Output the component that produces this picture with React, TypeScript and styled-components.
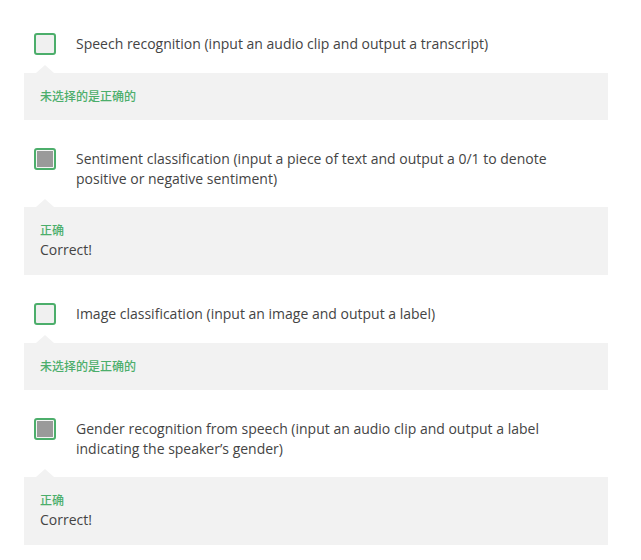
import React from "react";
import styled, { createGlobalStyle } from "styled-components";

const GlobalStyle = createGlobalStyle`
  html, body { margin: 0; padding: 0; background: #ffffff; }
  body { font-family: "Open Sans", "Noto Sans CJK SC", sans-serif; }
`;

const GREEN = "#4cae6b";
const PANEL = "#f2f2f2";

const Page = styled.div`
  width: 584px;
  padding: 34px 33px 16px 24px;
  display: flex;
  flex-direction: column;
  gap: 29px;
`;

const Item = styled.div`
  display: flex;
  flex-direction: column;
`;

const Row = styled.div`
  display: flex;
  align-items: flex-start;
  gap: 20px;
  padding-left: 10px;
`;

const Box = styled.div<{ $checked: boolean }>`
  flex: none;
  box-sizing: border-box;
  width: 22px;
  height: 22px;
  margin-top: -1px;
  border: 2px solid ${GREEN};
  border-radius: 3px;
  background: ${(p) => (p.$checked ? "#f4f4f4" : "#f0f0f0")};
  padding: 1px;
  display: flex;
`;

const Fill = styled.div`
  flex: 1;
  background: #9a9a9a;
`;

const Label = styled.div`
  font-size: 14px;
  line-height: 20px;
  color: #444444;
  max-width: 500px;
`;

const Feedback = styled.div`
  position: relative;
  margin-top: 18px;
  background: ${PANEL};
  padding: 14px 16px 15px;
  &::before {
    content: "";
    position: absolute;
    left: 12px;
    top: -8px;
    width: 0;
    height: 0;
    border-left: 9px solid transparent;
    border-right: 9px solid transparent;
    border-bottom: 8px solid ${PANEL};
  }
`;

const Verdict = styled.div`
  font-family: "Noto Sans CJK SC", sans-serif;
  font-size: 12px;
  font-weight: 500;
  line-height: 18px;
  color: ${GREEN};
`;

const Note = styled.div`
  font-size: 14px;
  line-height: 20px;
  margin-top: 1px;
  color: #444444;
`;

type Option = { text: string; checked: boolean };

const options: Option[] = [
  { text: "Speech recognition (input an audio clip and output a transcript)", checked: false },
  {
    text: "Sentiment classification (input a piece of text and output a 0/1 to denote positive or negative sentiment)",
    checked: true,
  },
  { text: "Image classification (input an image and output a label)", checked: false },
  {
    text: "Gender recognition from speech (input an audio clip and output a label indicating the speaker\u2019s gender)",
    checked: true,
  },
];

export default function App() {
  return (
    <>
      <GlobalStyle />
      <Page>
        {options.map((o, i) => (
          <Item key={i}>
            <Row>
              <Box $checked={o.checked}>{o.checked && <Fill />}</Box>
              <Label>{o.text}</Label>
            </Row>
            <Feedback>
              <Verdict>{o.checked ? "正确" : "未选择的是正确的"}</Verdict>
              {o.checked && <Note>Correct!</Note>}
            </Feedback>
          </Item>
        ))}
      </Page>
    </>
  );
}
